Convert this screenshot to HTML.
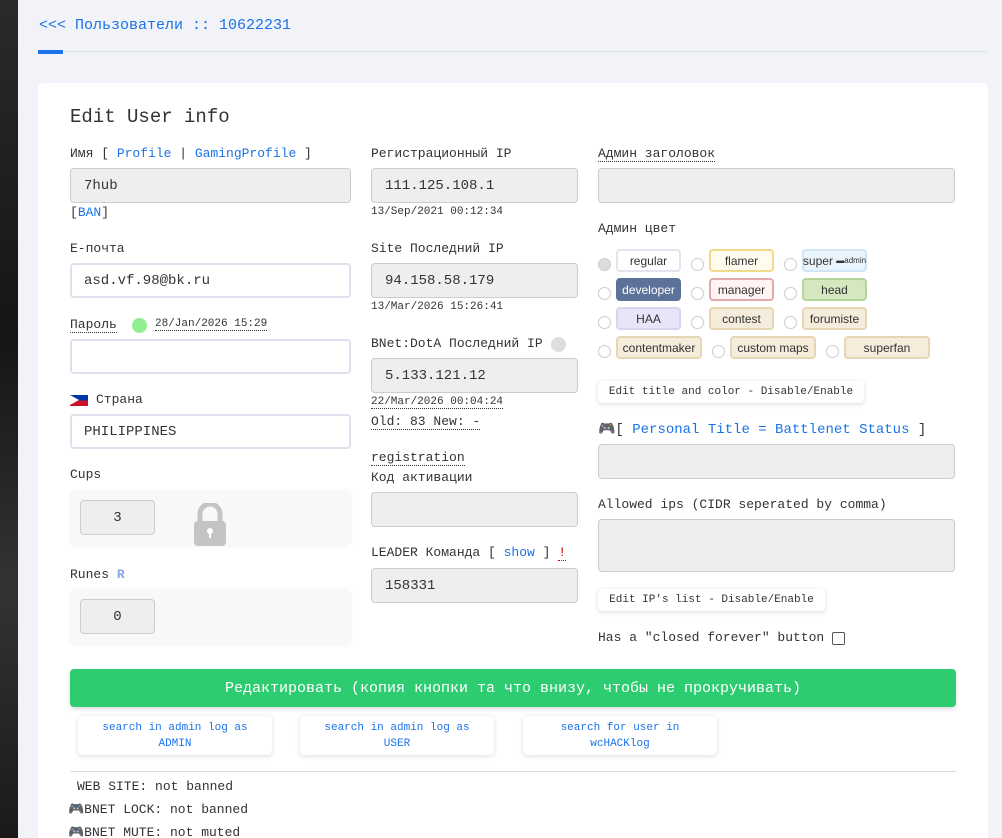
<!DOCTYPE html>
<html><head><meta charset="utf-8"><style>
*{box-sizing:border-box;margin:0;padding:0}
html{width:1002px;height:838px;overflow:hidden}
body{width:1002px;height:838px;overflow:hidden;background:#f1f3f8;font-family:"Liberation Mono","DejaVu Sans Mono",monospace;font-size:13px;color:#333;position:relative}
.a{position:absolute;white-space:nowrap}
.side{position:absolute;left:0;top:0;width:18px;height:838px;background:linear-gradient(180deg,#2a2a2a,#151515 40%,#333 70%,#1a1a1a)}
a,.l{color:#1a73e8;text-decoration:none}
.card{position:absolute;left:38px;top:83px;width:950px;height:755px;background:#fff;border-radius:6px 6px 0 0}
.ro{position:absolute;background:#eee;border:1px solid #ccc;border-radius:4px;padding-left:13px;font-size:14px;display:flex;align-items:center;color:#333}
.wi{position:absolute;background:#fff;border:2px solid #dde1ee;border-radius:4px;padding-left:12px;font-size:14px;display:flex;align-items:center}
.dot{border-bottom:1px dotted #333}
.sm{font-size:11px}
.tag{position:absolute;height:23px;border-radius:4px;border:2px solid;font-family:"Liberation Sans",sans-serif;font-size:12px;display:flex;align-items:center;justify-content:center}
.rad{position:absolute;width:13px;height:13px;border-radius:50%;border:1px solid #ccc;background:#fff}
.btn{position:absolute;background:#fff;box-shadow:0 1px 5px rgba(0,0,0,.15);border-radius:4px;font-size:11px;display:flex;align-items:center;justify-content:center;text-align:center;line-height:16px}
.box{position:absolute;background:#f8f8f8;border-radius:6px;box-shadow:0 1px 4px rgba(0,0,0,.06)}
</style></head><body>
<div class="side"></div>
<div class="a" style="left:39px;top:17px;font-size:15px;color:#1a73e8">&lt;&lt;&lt; Пользователи :: 10622231</div>
<div class="a" style="left:38px;top:51px;width:950px;height:1px;background:#dfe2e8"></div>
<div class="a" style="left:38px;top:50px;width:25px;height:4px;background:#1a73e8"></div>
<div class="card"></div>
<div class="a" style="left:70px;top:106px;font-size:19px;color:#333">Edit User info</div>

<!-- col1 -->
<div class="a" style="left:70px;top:146px">Имя [ <a>Profile</a> | <a>GamingProfile</a> ]</div>
<div class="ro" style="left:70px;top:168px;width:281px;height:35px">7hub</div>
<div class="a" style="left:70px;top:205px">[<a>BAN</a>]</div>
<div class="a" style="left:70px;top:241px">E-почта</div>
<div class="wi" style="left:70px;top:263px;width:281px;height:35px">asd.vf.98@bk.ru</div>
<div class="a" style="left:70px;top:317px"><span class="dot">Пароль</span></div>
<div class="a" style="left:132px;top:318px;width:15px;height:15px;border-radius:50%;background:#90ee90"></div>
<div class="a sm" style="left:155px;top:318px"><span class="dot">28/Jan/2026 15:29</span></div>
<div class="wi" style="left:70px;top:339px;width:281px;height:35px"></div>
<div class="a" style="left:70px;top:395px;width:18px;height:11px;background:linear-gradient(#0038a8 50%,#ce1126 50%)"><div style="width:0;height:0;border-top:5.5px solid transparent;border-bottom:5.5px solid transparent;border-left:9px solid #fff"></div></div>
<div class="a" style="left:96px;top:392px">Страна</div>
<div class="wi" style="left:70px;top:414px;width:281px;height:35px">PHILIPPINES</div>
<div class="a" style="left:70px;top:467px">Cups</div>
<div class="box" style="left:70px;top:490px;width:281px;height:55px"></div>
<div class="ro" style="left:80px;top:500px;width:75px;height:35px;justify-content:center;padding:0">3</div>
<svg class="a" style="left:193px;top:503px" width="34" height="43" viewBox="0 0 34 43"><path d="M7 18V11a10 10 0 0 1 20 0v7" fill="none" stroke="#c4c4c4" stroke-width="5"/><rect x="1" y="18" width="32" height="25" rx="4" fill="#c4c4c4"/><circle cx="17" cy="28" r="3" fill="#fff"/><rect x="16" y="28" width="2" height="7" fill="#fff"/></svg>
<div class="a" style="left:70px;top:567px">Runes <span style="color:#8aa4e8;font-weight:bold">R</span></div>
<div class="box" style="left:70px;top:589px;width:281px;height:55px"></div>
<div class="ro" style="left:80px;top:599px;width:75px;height:35px;justify-content:center;padding:0">0</div>

<!-- col2 -->
<div class="a" style="left:371px;top:146px">Регистрационный IP</div>
<div class="ro" style="left:371px;top:168px;width:207px;height:35px">111.125.108.1</div>
<div class="a sm" style="left:371px;top:206px">13/Sep/2021 00:12:34</div>
<div class="a" style="left:371px;top:241px">Site Последний IP</div>
<div class="ro" style="left:371px;top:263px;width:207px;height:35px">94.158.58.179</div>
<div class="a sm" style="left:371px;top:301px">13/Mar/2026 15:26:41</div>
<div class="a" style="left:371px;top:336px">BNet:DotA Последний IP</div>
<div class="a" style="left:551px;top:337px;width:15px;height:15px;border-radius:50%;background:#ddd"></div>
<div class="ro" style="left:371px;top:358px;width:207px;height:35px">5.133.121.12</div>
<div class="a sm" style="left:371px;top:396px"><span class="dot">22/Mar/2026 00:04:24</span></div>
<div class="a" style="left:371px;top:414px"><span class="dot">Old: 83 New: -</span></div>
<div class="a" style="left:371px;top:450px"><span class="dot">registration</span></div>
<div class="a" style="left:371px;top:470px">Код активации</div>
<div class="ro" style="left:371px;top:492px;width:207px;height:35px"></div>
<div class="a" style="left:371px;top:545px">LEADER Команда [ <a>show</a> ] <span style="color:#c00;border-bottom:1px dotted #c00">!</span></div>
<div class="ro" style="left:371px;top:568px;width:207px;height:35px">158331</div>

<!-- col3 -->
<div class="a" style="left:598px;top:146px"><span class="dot">Админ заголовок</span></div>
<div class="ro" style="left:598px;top:168px;width:357px;height:35px"></div>
<div class="a" style="left:598px;top:221px">Админ цвет</div>
<div class="rad" style="left:598px;top:258px;background:#ddd"></div>
<div class="tag" style="left:616px;top:249px;width:65px;border-color:#e4e4ee;background:#fff">regular</div>
<div class="rad" style="left:691px;top:258px"></div>
<div class="tag" style="left:709px;top:249px;width:65px;border-color:#f3d98a;background:#fffbee">flamer</div>
<div class="rad" style="left:784px;top:258px"></div>
<div class="tag" style="left:802px;top:249px;width:65px;border-color:#cfe4f5;background:#eaf4fc">super&nbsp;<span style="font-size:8px">▬admin</span></div>
<div class="rad" style="left:598px;top:287px"></div>
<div class="tag" style="left:616px;top:278px;width:65px;border-color:#5d7298;background:#5d7298;color:#fff">developer</div>
<div class="rad" style="left:691px;top:287px"></div>
<div class="tag" style="left:709px;top:278px;width:65px;border-color:#e0aaaa;background:#fff3f3">manager</div>
<div class="rad" style="left:784px;top:287px"></div>
<div class="tag" style="left:802px;top:278px;width:65px;border-color:#b5d49a;background:#d4e8c0">head</div>
<div class="rad" style="left:598px;top:316px"></div>
<div class="tag" style="left:616px;top:307px;width:65px;border-color:#d6d6ef;background:#e6e6f8">HAA</div>
<div class="rad" style="left:691px;top:316px"></div>
<div class="tag" style="left:709px;top:307px;width:65px;border-color:#e6d6b4;background:#f5ecdc">contest</div>
<div class="rad" style="left:784px;top:316px"></div>
<div class="tag" style="left:802px;top:307px;width:65px;border-color:#e6d6b4;background:#f5ecdc">forumiste</div>
<div class="rad" style="left:598px;top:345px"></div>
<div class="tag" style="left:616px;top:336px;width:86px;border-color:#e6d6b4;background:#f5ecdc">contentmaker</div>
<div class="rad" style="left:712px;top:345px"></div>
<div class="tag" style="left:730px;top:336px;width:86px;border-color:#e6d6b4;background:#f5ecdc">custom maps</div>
<div class="rad" style="left:826px;top:345px"></div>
<div class="tag" style="left:844px;top:336px;width:86px;border-color:#e6d6b4;background:#f5ecdc">superfan</div>
<div class="btn" style="left:598px;top:381px;width:266px;height:22px">Edit title and color - Disable/Enable</div>
<div class="a" style="left:598px;top:421px;font-size:14px">🎮[ <a>Personal Title = Battlenet Status</a> ]</div>
<div class="ro" style="left:598px;top:444px;width:357px;height:35px"></div>
<div class="a" style="left:598px;top:497px;font-size:13px">Allowed ips (CIDR seperated by comma)</div>
<div class="ro" style="left:598px;top:519px;width:357px;height:53px"></div>
<div class="btn" style="left:598px;top:589px;width:227px;height:22px">Edit IP's list - Disable/Enable</div>
<div class="a" style="left:598px;top:630px;font-size:13px">Has a "closed forever" button</div>
<div class="a" style="left:832px;top:632px;width:13px;height:13px;border:1px solid #555;border-radius:2px"></div>

<!-- bottom -->
<div class="a" style="left:70px;top:669px;width:886px;height:38px;background:#2ecc71;border-radius:4px;box-shadow:0 2px 4px rgba(0,0,0,.15);color:#fff;font-size:15px;display:flex;align-items:center;justify-content:center">Редактировать (копия кнопки та что внизу, чтобы не прокручивать)</div>
<div class="btn l" style="left:78px;top:716px;width:194px;height:39px">search in admin log as<br>ADMIN</div>
<div class="btn l" style="left:300px;top:716px;width:194px;height:39px">search in admin log as<br>USER</div>
<div class="btn l" style="left:523px;top:716px;width:194px;height:39px">search for user in<br>wcHACKlog</div>
<div class="a" style="left:70px;top:771px;width:886px;height:1px;background:#ddd"></div>
<div class="a" style="left:77px;top:779px;font-size:13px">WEB SITE: not banned</div>
<div class="a" style="left:68px;top:802px;font-size:13px">🎮BNET LOCK: not banned</div>
<div class="a" style="left:68px;top:825px;font-size:13px">🎮BNET MUTE: not muted</div>
</body></html>
